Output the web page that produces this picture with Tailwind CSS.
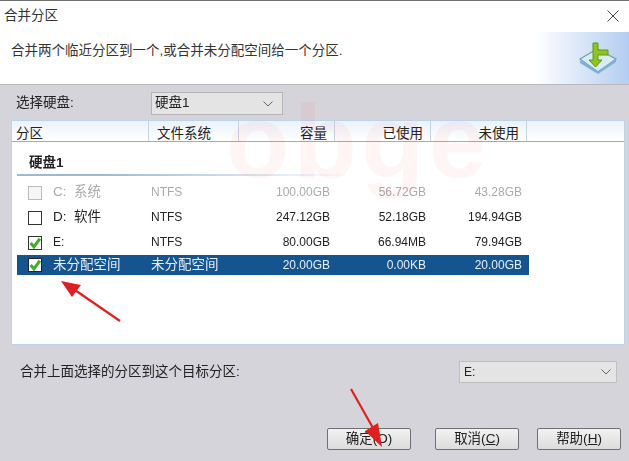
<!DOCTYPE html>
<html lang="zh-CN">
<head>
  <meta charset="UTF-8" />
  <title>合并分区</title>
  <script src="https://cdn.jsdelivr.net/npm/@tailwindcss/browser@4"></script>
</head>
<body class="bg-[#d4d4da] text-[#222] font-['Liberation_Sans','Noto_Sans_CJK_SC',sans-serif] text-[13.5px] overflow-hidden">
  <div class="relative w-[629px] h-[461px] flex flex-col border-t border-[#6e6e6e] overflow-hidden blur-[0.4px]">

    <!-- Title -->
    <div class="h-[31px] bg-white flex items-center justify-between pl-[4px] pr-[10px] shrink-0">
      <span class="text-[#333] -mt-[1px]">合并分区</span>
      <svg class="w-[12px] h-[12px] -mt-[2px]" viewBox="0 0 12 12" fill="none" stroke="#444" stroke-width="1"><path d="M0.5 0.5 11.5 11.5M11.5 0.5 0.5 11.5"/></svg>
    </div>

    <!-- Header -->
    <div class="h-[53px] shrink-0 flex items-start justify-between pl-[11px] bg-gradient-to-r from-white from-[85%] to-[#b4cdf0] border-b border-[#b8b8bc]">
      <span class="mt-[9px] text-[#333]">合并两个临近分区到一个,或合并未分配空间给一个分区.</span>
      <svg class="w-[38px] h-[32px] mt-[10px] mr-[12px]" viewBox="0 0 38 32">
        <path d="M1 17 18 7 37 17 19 30Z" fill="#d9ecf6" stroke="#6f9fc0" stroke-width="1.2"/>
        <path d="M1 18V21L19 32 37 20V17L19 29Z" fill="#7fb0d0"/>
        <path d="M14 1H19V8H29V13H19V18H23L16.500 25 10 18H14Z" fill="#8fc31f" stroke="#5f9a10" stroke-width="1"/>
      </svg>
    </div>

    <!-- Disk select -->
    <div class="h-[35px] shrink-0 flex items-center pl-[16px] pt-[2px]">
      <span class="w-[135px]">选择硬盘:</span>
      <div class="w-[132px] h-[23px] bg-[#e4e4e4] border border-[#b4b4b4] flex items-center justify-between pl-[3px] pr-[9px]">
        <span>硬盘1</span>
        <svg class="w-[10px] h-[6px]" viewBox="0 0 10 6" fill="none" stroke="#666"><path d="M0.500 0.500 5 5 9.500 0.500"/></svg>
      </div>
    </div>

    <!-- Partition table -->
    <div class="relative ml-[11px] w-[614px] h-[225px] shrink-0 bg-white border border-[#bcd3ea] overflow-hidden">
      <div class="flex h-[21px] bg-gradient-to-b from-[#eaf2fb] to-white border-b border-[#8fafd0] leading-[25px]">
        <div class="w-[137px] pl-[4px] border-r border-[#c5d5e8]">分区</div>
        <div class="w-[90px] pl-[8px] border-r border-[#c5d5e8]">文件系统</div>
        <div class="w-[96px] pr-[7px] text-right border-r border-[#c5d5e8]">容量</div>
        <div class="w-[96px] pr-[7px] text-right border-r border-[#c5d5e8]">已使用</div>
        <div class="w-[96px] pr-[7px] text-right border-r border-[#c5d5e8]">未使用</div>
      </div>

      <div class="relative pl-[5px] w-[517px]">
        <div class="h-[32px] flex items-center pl-[12px] pt-[10px] font-bold text-[#222]">硬盘1</div>
        <div class="h-[2px] w-[335px] mb-[4px] bg-gradient-to-r from-[#9cb8d4] from-[25%] to-transparent"></div>

        <div class="h-[25px] flex items-center text-[#aaa]">
          <span class="w-[14px] h-[14px] ml-[11px] border border-[#bbb] bg-[#f6f6f6]"></span>
          <span class="w-[100px] ml-[11px]">C:&nbsp; 系统</span>
          <span class="w-[70px] ml-[-2px] text-[12px] pb-[1px]">NTFS</span>
          <span class="w-[109px] text-right text-[12px] pb-[1px]">100.00GB</span>
          <span class="w-[96px] text-right text-[12px] pb-[1px]">56.72GB</span>
          <span class="w-[96px] text-right text-[12px] pb-[1px]">43.28GB</span>
        </div>
        <div class="h-[25px] flex items-center">
          <span class="w-[14px] h-[14px] ml-[11px] border border-[#333] bg-white"></span>
          <span class="w-[100px] ml-[11px]">D:&nbsp; 软件</span>
          <span class="w-[70px] ml-[-2px] text-[12px] pb-[1px]">NTFS</span>
          <span class="w-[109px] text-right text-[12px] pb-[1px]">247.12GB</span>
          <span class="w-[96px] text-right text-[12px] pb-[1px]">52.18GB</span>
          <span class="w-[96px] text-right text-[12px] pb-[1px]">194.94GB</span>
        </div>
        <div class="h-[25px] flex items-center">
          <span class="w-[14px] h-[14px] ml-[11px] border border-[#333] bg-white flex items-center justify-center">
            <svg class="w-[12px] h-[12px]" viewBox="0 0 11 11" fill="none" stroke="#3fae2a" stroke-width="2.800"><path d="M1.500 5.500 4.500 9 10 1.500"/></svg>
          </span>
          <span class="w-[100px] ml-[11px] pb-[1px] text-[12px]">E:</span>
          <span class="w-[70px] ml-[-2px] text-[12px] pb-[1px]">NTFS</span>
          <span class="w-[109px] text-right text-[12px] pb-[1px]">80.00GB</span>
          <span class="w-[96px] text-right text-[12px] pb-[1px]">66.94MB</span>
          <span class="w-[96px] text-right text-[12px] pb-[1px]">79.94GB</span>
        </div>
        <div class="h-[20px] flex items-center bg-[#14548f] text-[#e8eef5]">
          <span class="w-[14px] h-[14px] ml-[11px] border border-[#222] bg-white flex items-center justify-center">
            <svg class="w-[12px] h-[12px]" viewBox="0 0 11 11" fill="none" stroke="#3fae2a" stroke-width="2.800"><path d="M1.500 5.500 4.500 9 10 1.500"/></svg>
          </span>
          <span class="w-[100px] ml-[11px] pt-[1px]">未分配空间</span>
          <span class="w-[70px] ml-[-2px] pt-[1px] whitespace-nowrap">未分配空间</span>
          <span class="w-[109px] text-right text-[12px]">20.00GB</span>
          <span class="w-[96px] text-right text-[12px]">0.00KB</span>
          <span class="w-[96px] text-right text-[12px]">20.00GB</span>
        </div>
      </div>
    </div>

    <!-- Target partition -->
    <div class="h-[38px] shrink-0 flex items-center justify-between pl-[20px] pr-[12px] mt-[8px]">
      <span>合并上面选择的分区到这个目标分区:</span>
      <div class="w-[158px] h-[22px] bg-[#e4e4e4] border border-[#c0c0c0] flex items-center justify-between pl-[4px] pr-[5px]">
        <span class="text-[12px]">E:</span>
        <svg class="w-[10px] h-[6px]" viewBox="0 0 10 6" fill="none" stroke="#666"><path d="M0.500 0.500 5 5 9.500 0.500"/></svg>
      </div>
    </div>

    <!-- Buttons -->
    <div class="flex justify-end gap-[18px] pr-[8px] mt-[37px] shrink-0">
      <button class="w-[84px] h-[22px] mr-[6px] rounded-[2px] border border-[#707070] bg-gradient-to-b from-[#f2f2f2] to-[#dcdcdc] leading-none">确定(O)</button>
      <button class="w-[84px] h-[22px] rounded-[2px] border border-[#707070] bg-gradient-to-b from-[#f2f2f2] to-[#dcdcdc] leading-none">取消(<span class="underline">C</span>)</button>
      <button class="w-[84px] h-[22px] rounded-[2px] border border-[#707070] bg-gradient-to-b from-[#f2f2f2] to-[#dcdcdc] leading-none">帮助(<span class="underline">H</span>)</button>
    </div>

    <!-- Watermark over the dialog -->
    <div class="absolute left-[226px] top-[88px] text-[104px] leading-none font-bold tracking-[4px] text-[rgba(255,0,0,0.04)] pointer-events-none">obge</div>

    <!-- Red annotation arrows -->
    <svg class="absolute left-0 top-[-1px] w-[629px] h-[461px] pointer-events-none" viewBox="0 0 629 461">
      <path d="M120 321 72 288" stroke="#e02020" stroke-width="2.200" fill="none"/>
      <path d="M61 281 81 285 72 297Z" fill="#e02020"/>
      <path d="M351 389 373 428" stroke="#e02020" stroke-width="2.200" fill="none"/>
      <path d="M382 447 365 431 378 423Z" fill="#e02020"/>
    </svg>
  </div>
</body>
</html>
